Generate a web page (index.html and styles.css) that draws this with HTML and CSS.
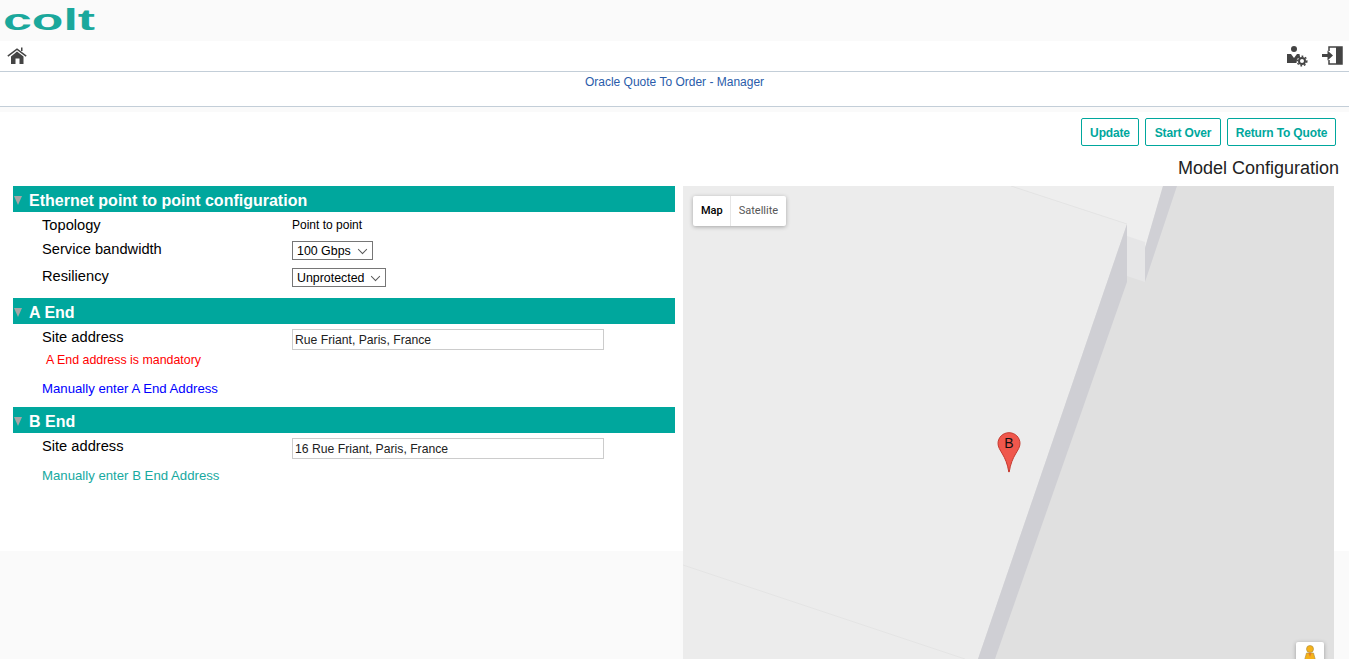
FILE: index.html
```html
<!doctype html>
<html lang="en">
    <head>
        <meta charset="UTF-8" />
        <title>Oracle Quote To Order - Manager</title>
        <link rel="stylesheet" href="styles.css">
    </head>
    <body>
        <!-- Logo strip -->
        <header class="logo-bar">
            <svg class="logo" width="100" height="41" viewBox="0 0 100 41" role="img" aria-label="colt">
                <text x="3" y="30" textLength="92" lengthAdjust="spacingAndGlyphs">colt</text>
            </svg>
        </header>

        <nav class="nav-bar">
            <svg class="icon" width="20" height="20" viewBox="0 0 20 20">
                <path fill="none" stroke="#444" stroke-width="1.5" d="M.8 10.200 10 3.200l9.200 7" />
                <rect x="14" y="1.500" width="1.500" height="3.500" fill="#444" />
                <path fill="#444" d="M10 5.500l6.500 5V18h-4v-5.500h-4V18H4v-7.500z" />
            </svg>
            <div class="nav-right">
                <svg class="icon" width="22" height="22" viewBox="0 0 22 22">
                    <circle cx="8" cy="4" r="3" fill="#444" />
                    <path fill="#444" d="M1 9h4l3 4 3-4h2.500l.5 3-3 2-.5 4H1z" />
                    <circle cx="16" cy="16" r="3" fill="none" stroke="#444" stroke-width="2" />
                    <circle cx="16" cy="16" r="4.800" fill="none" stroke="#444" stroke-width="1.500" stroke-dasharray="1.800 1.800" />
                </svg>
                <svg class="icon" width="22" height="22" viewBox="0 0 22 22">
                    <path fill="none" stroke="#444" stroke-width="1.500" d="M8 6V2h13v17H8v-4" />
                    <path fill="#444" d="M15 2h6v17h-6z" />
                    <path fill="#444" d="M1 9h5.500V5.500l5.500 5-5.500 5V12H1z" />
                </svg>
            </div>
        </nav>

        <div class="title-bar">Oracle Quote To Order - Manager</div>
        <div class="title-gap"></div>

        <main class="panel">
            <div class="actions">
                <button class="btn-update">Update</button>
                <button class="btn-start">Start Over</button>
                <button class="btn-return">Return To Quote</button>
            </div>
            <h2 class="model-title">Model Configuration</h2>

            <div class="columns">
                <div class="config">
                    <section class="group">
                        <h3><span class="arrow"></span>Ethernet point to point configuration</h3>
                        <div class="row row-first">
                            <label>Topology</label>
                            <span class="value">Point to point</span>
                        </div>
                        <div class="row">
                            <label>Service bandwidth</label>
                            <span class="select select-bw">100 Gbps<i class="chev"></i></span>
                        </div>
                        <div class="row">
                            <label>Resiliency</label>
                            <span class="select select-res">Unprotected<i class="chev"></i></span>
                        </div>
                    </section>

                    <section class="group">
                        <h3><span class="arrow"></span>A End</h3>
                        <div class="row row-site">
                            <label>Site address</label>
                            <input value="Rue Friant, Paris, France" />
                        </div>
                        <p class="error">A End address is mandatory</p>
                        <a class="manual manual-a" href="#">Manually enter A End Address</a>
                    </section>

                    <section class="group">
                        <h3><span class="arrow"></span>B End</h3>
                        <div class="row row-site">
                            <label>Site address</label>
                            <input value="16 Rue Friant, Paris, France" />
                        </div>
                        <a class="manual manual-b" href="#">Manually enter B End Address</a>
                    </section>
                </div>

                <div class="map">
                    <svg class="map-bg" width="651" height="473" viewBox="0 0 651 473">
                        <rect width="651" height="473" fill="#e0e0e0" />
                        <!-- building blocks, coords are map-local -->
                        <polygon fill="#ececec" points="0,0 328,0 444,38 295,473 0,473" />
                        <polygon fill="#eeeeee" points="328,0 480,0 462,62 444,56 444,38" />
                        <polygon fill="#cfcfd4" points="444,38 444,96 312,473 295,473" />
                        <polygon fill="#e6e6e7" points="444,50 462,56 462,96 444,90" />
                        <polygon fill="#d0d0d5" points="480,0 494,0 462,96 462,62" />
                        <polyline fill="none" stroke="#e4e4e4" points="328,0 444,38" />
                        <polyline fill="none" stroke="#e4e4e4" points="0,379 282,473" />
                    </svg>

                    <div class="map-type">
                        <span class="map-btn map-btn-on">Map</span>
                        <span class="map-btn">Satellite</span>
                    </div>

                    <div class="pin">
                        <svg width="24" height="41" viewBox="0 0 24 41">
                            <path fill="#f0574c" stroke="#c5392f" stroke-width="1" d="M12 .7C5.800.7 1 5.500 1 11.500c0 7 8.300 11.500 10.800 28.500h.4C14.700 23 23 18.500 23 11.500 23 5.500 18.200.7 12 .7z" />
                        </svg>
                        <span class="pin-label">B</span>
                    </div>

                    <div class="pegman">
                        <svg width="14" height="17" viewBox="0 0 14 17">
                            <circle cx="7" cy="4" r="3.500" fill="#f5b21a" stroke="#a98a3a" stroke-width=".6" />
                            <path fill="#f5b21a" stroke="#a98a3a" stroke-width=".6" d="M3.500 8h7L13 17H1z" />
                            <path fill="#e5792a" d="M5.500 8h3L7 12z" />
                        </svg>
                    </div>
                </div>
            </div>
        </main>
    </body>
</html>
```

FILE: styles.css
```css
:root {
    --color-teal: #00a79d;
    --color-line: #c3ced8;
    --color-page: #fafafa;
}

html,
body {
    height: 659px;
    overflow: hidden;
}

body {
    margin: 0;
    background: var(--color-page);
    font-family: "Liberation Sans", Arial, sans-serif;
    color: #000;
}

.logo-bar {
    height: 41px;
}

.logo {
    display: block;
}

.logo text {
    font-family: "Liberation Sans", Arial, sans-serif;
    font-weight: bold;
    font-size: 30px;
    fill: #1aa89c;
}

.nav-bar {
    height: 30px;
    background: #fff;
    border-bottom: 1px solid var(--color-line);
    display: flex;
    align-items: center;
    justify-content: space-between;
    padding: 0 6px 0 7px;
}

.nav-right {
    display: flex;
    gap: 13px;
}

.icon {
    display: block;
}

.title-bar {
    height: 34px;
    background: #fff;
    border-bottom: 1px solid var(--color-line);
    text-align: center;
    font-size: 12px;
    line-height: 20px;
    color: #2a5caa;
}

.title-gap {
    height: 5px;
}

.panel {
    height: 439px;
    background: #fff;
}

.actions {
    display: flex;
    justify-content: flex-end;
    gap: 6px;
    padding: 6px 13px 0 0;
}

.actions button {
    height: 28px;
    padding: 1px 0 0;
    background: #fff;
    border: 1px solid var(--color-teal);
    border-radius: 2px;
    color: var(--color-teal);
    font: bold 12px "Liberation Sans", Arial, sans-serif;
    letter-spacing: -0.15px;
}

.actions .btn-update {
    width: 58px;
}

.actions .btn-start {
    width: 76px;
}

.actions .btn-return {
    width: 109px;
}

.model-title {
    margin: 0;
    padding: 12px 10px 0 0;
    height: 33px;
    box-sizing: border-box;
    text-align: right;
    font-size: 18px;
    font-weight: normal;
    line-height: 21px;
    color: #222;
}

.columns {
    display: flex;
    padding-left: 13px;
    margin-top: 7px;
}

.config {
    width: 662px;
    margin-right: 8px;
    flex: none;
}

.map {
    width: 651px;
    height: 473px;
    flex: none;
    position: relative;
    overflow: hidden;
}

.group {
    margin-bottom: 6px;
}

.group h3 {
    margin: 0;
    height: 26px;
    box-sizing: border-box;
    padding-top: 3px;
    display: flex;
    align-items: center;
    background: var(--color-teal);
    color: #fff;
    font-size: 16px;
    font-weight: bold;
}

.arrow {
    width: 0;
    height: 0;
    margin: 0 7px 0 1px;
    border-left: 4px solid transparent;
    border-right: 4px solid transparent;
    border-top: 9px solid #a6a6a6;
}

.row {
    display: flex;
    align-items: flex-start;
    height: 27px;
    padding-left: 29px;
    font-size: 14.67px;
}

.row label {
    width: 250px;
    flex: none;
    line-height: 22px;
}

.row-first {
    height: 26px;
    line-height: 26px;
}

.row-first label {
    line-height: 26px;
}

.row-site {
    height: 23px;
    padding-top: 5px;
}

.row-site label {
    line-height: 16px;
}

.value {
    font-size: 12px;
}

.select {
    display: flex;
    align-items: center;
    justify-content: space-between;
    box-sizing: border-box;
    height: 19px;
    margin-top: 3px;
    padding: 0 6px 0 4px;
    border: 1px solid #767676;
    font-size: 12.4px;
    background: #fff;
}

.select-bw {
    width: 81px;
}

.select-res {
    width: 94px;
}

.chev {
    width: 6px;
    height: 6px;
    margin: -3px 0 0 0;
    border-right: 1px solid #555;
    border-bottom: 1px solid #555;
    transform: rotate(45deg) scale(.95);
}

.row input {
    box-sizing: border-box;
    width: 312px;
    height: 21px;
    padding: 0 2px;
    border: 1px solid #ccc;
    color: #222;
    font: 12.2px "Liberation Sans", Arial, sans-serif;
}

.error {
    margin: 0;
    padding-left: 33px;
    font-size: 12.4px;
    line-height: 16px;
    color: #f00;
}

.manual {
    display: block;
    padding-left: 29px;
    font-size: 13.2px;
    line-height: 16px;
    text-decoration: none;
}

.manual-a {
    margin-top: 13px;
    color: #00f;
    margin-bottom: 10px;
}

.manual-b {
    margin-top: 7px;
    color: #17a99f;
}

.map-bg {
    display: block;
}

.map-type {
    position: absolute;
    left: 10px;
    top: 10px;
    display: flex;
    background: #fff;
    border-radius: 2px;
    box-shadow: 0 1px 4px rgba(0, 0, 0, 0.3);
    font: 11px/30px Roboto, Arial, sans-serif;
}

.map-btn {
    padding: 0 8px;
    color: #565656;
}

.map-btn-on {
    padding-right: 7px;
    color: #000;
    font-weight: 500;
    border-right: 1px solid #e6e6e6;
}

.pin {
    position: absolute;
    left: 314px;
    top: 246px;
    width: 24px;
    height: 41px;
}

.pin-label {
    position: absolute;
    left: 0;
    right: 0;
    top: 4px;
    text-align: center;
    font-size: 14px;
    line-height: 14px;
    color: #111;
}

.pegman {
    position: absolute;
    left: 613px;
    top: 456px;
    width: 28px;
    height: 28px;
    background: #fff;
    border-radius: 2px;
    box-shadow: 0 1px 4px rgba(0, 0, 0, 0.3);
    text-align: center;
    padding-top: 3px;
    box-sizing: border-box;
}
```
